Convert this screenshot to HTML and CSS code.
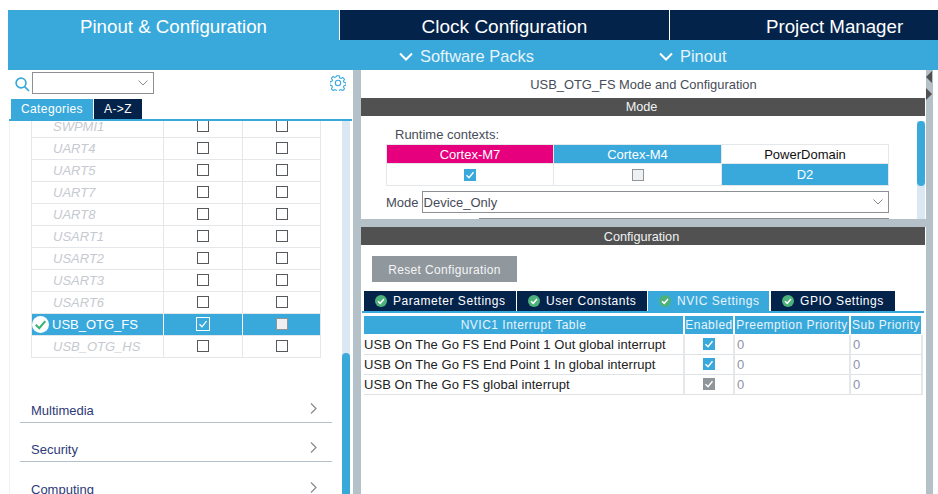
FILE: index.html
```html
<!DOCTYPE html>
<html lang="en">
<head>
<meta charset="utf-8">
<title>USB_OTG_FS Mode and Configuration</title>
<link rel="stylesheet" href="styles.css">
</head>
<body>
<div class="app">
  <header class="topbar">
    <nav class="maintabs">
      <div class="maintab pinout">Pinout &amp; Configuration</div>
      <div class="maintab clock">Clock Configuration</div>
      <div class="maintab project">Project Manager</div>
    </nav>
    <div class="subbar">
      <div class="subleft"></div>
      <div class="subitem packs"><svg class="subchev" viewBox="0 0 14 9"><path d="M1 1.5 7 7.5 13 1.5" /></svg>Software Packs</div>
      <div class="subitem pins"><svg class="subchev" viewBox="0 0 14 9"><path d="M1 1.5 7 7.5 13 1.5" /></svg>Pinout</div>
    </div>
  </header>
  <main class="content">
    <aside class="left">
      <div class="searchrow">
        <svg class="search" viewBox="0 0 15 15"><circle cx="6" cy="6" r="4.9"/><path d="M9.6 9.6 14 14"/></svg>
        <div class="combo"><svg class="combochev" viewBox="0 0 10 6"><path d="M.5.5 5 5 9.5.5"/></svg></div>
        <svg class="gear" viewBox="0 0 16 16"><path d="M6.7.8h2.6l.4 2 1.2.6 1.8-1 1.8 1.9-1 1.7.5 1.3 2 .5v2.5l-2 .5-.5 1.2 1 1.8-1.8 1.8-1.8-1-1.200.5-.5 2H6.700l-.5-2-1.200-.5-1.800 1-1.800-1.800 1-1.800-.5-1.200-2-.5V6.800l2-.5.5-1.300-1-1.700L3 1.400l1.800 1 1.300-.6z"/><circle cx="8" cy="8" r="2.700"/></svg>
      </div>
      <div class="lefttabs">
        <div class="lefttab active">Categories</div>
        <div class="lefttab">A-&gt;Z</div>
      </div>
      <div class="leftbody">
        <div class="leftlist">
          <div class="periph">
            <div class="prow"><span class="pname">SWPMI1</span><span class="pcell"><i class="box"></i></span><span class="pcell"><i class="box"></i></span></div>
            <div class="prow"><span class="pname">UART4</span><span class="pcell"><i class="box"></i></span><span class="pcell"><i class="box"></i></span></div>
            <div class="prow"><span class="pname">UART5</span><span class="pcell"><i class="box"></i></span><span class="pcell"><i class="box"></i></span></div>
            <div class="prow"><span class="pname">UART7</span><span class="pcell"><i class="box"></i></span><span class="pcell"><i class="box"></i></span></div>
            <div class="prow"><span class="pname">UART8</span><span class="pcell"><i class="box"></i></span><span class="pcell"><i class="box"></i></span></div>
            <div class="prow"><span class="pname">USART1</span><span class="pcell"><i class="box"></i></span><span class="pcell"><i class="box"></i></span></div>
            <div class="prow"><span class="pname">USART2</span><span class="pcell"><i class="box"></i></span><span class="pcell"><i class="box"></i></span></div>
            <div class="prow"><span class="pname">USART3</span><span class="pcell"><i class="box"></i></span><span class="pcell"><i class="box"></i></span></div>
            <div class="prow"><span class="pname">USART6</span><span class="pcell"><i class="box"></i></span><span class="pcell"><i class="box"></i></span></div>
            <div class="prow selected">
              <span class="pname"><svg class="okbig" viewBox="0 0 16 16"><circle cx="8" cy="8" r="8"/><path d="M3.500 8.200 6.800 11.500 12.500 4.800"/></svg>USB_OTG_FS</span>
              <span class="pcell"><i class="box on"><svg viewBox="0 0 12 12"><path d="M2.500 6.300 5 8.800 9.500 3.200"/></svg></i></span>
              <span class="pcell"><i class="box dis"></i></span>
            </div>
            <div class="prow"><span class="pname">USB_OTG_HS</span><span class="pcell"><i class="box"></i></span><span class="pcell"><i class="box"></i></span></div>
          </div>
          <div class="cat first"><span>Multimedia</span><svg class="catchev" viewBox="0 0 7 11"><path d="M1 .5 6 5.500 1 10.500"/></svg></div>
          <div class="cat"><span>Security</span><svg class="catchev" viewBox="0 0 7 11"><path d="M1 .5 6 5.500 1 10.500"/></svg></div>
          <div class="cat"><span>Computing</span><svg class="catchev" viewBox="0 0 7 11"><path d="M1 .5 6 5.500 1 10.500"/></svg></div>
        </div>
        <div class="lefttrack"><div class="leftthumb"></div></div>
      </div>
    </aside>
    <div class="splitter"></div>
    <section class="right">
      <h1 class="paneltitle">USB_OTG_FS Mode and Configuration</h1>
      <h2 class="bandhead">Mode</h2>
      <div class="modebody">
        <div class="modeinner">
          <div class="rtlabel">Runtime contexts:</div>
          <div class="rttable">
            <div class="rth m7">Cortex-M7</div>
            <div class="rth m4">Cortex-M4</div>
            <div class="rth pd">PowerDomain</div>
            <div class="rtd"><i class="mini on"><svg viewBox="0 0 12 12"><path d="M2.500 6.300 5 8.800 9.500 3.200"/></svg></i></div>
            <div class="rtd"><i class="mini off"></i></div>
            <div class="rtd d2">D2</div>
          </div>
          <div class="moderow">
            <span class="modelabel">Mode</span>
            <div class="modeselect">Device_Only<svg class="combochev" viewBox="0 0 10 6"><path d="M.5.5 5 5 9.500.5"/></svg></div>
          </div>
          <div class="clipselect"></div>
        </div>
        <div class="modetrack"><div class="modethumb"></div></div>
      </div>
      <div class="sep"></div>
      <h2 class="bandhead cfg">Configuration</h2>
      <div class="configbody">
        <button class="reset" type="button">Reset Configuration</button>
        <div class="cfgtabs">
          <div class="cfgtab t1"><svg class="ok" viewBox="0 0 12 12"><circle cx="6" cy="6" r="6"/><path d="M3 6.200 5.200 8.300 9 3.900"/></svg>Parameter Settings</div>
          <div class="cfgtab t2"><svg class="ok" viewBox="0 0 12 12"><circle cx="6" cy="6" r="6"/><path d="M3 6.200 5.200 8.300 9 3.900"/></svg>User Constants</div>
          <div class="cfgtab t3 active"><svg class="ok" viewBox="0 0 12 12"><circle cx="6" cy="6" r="6"/><path d="M3 6.200 5.200 8.300 9 3.900"/></svg>NVIC Settings</div>
          <div class="cfgtab t4"><svg class="ok" viewBox="0 0 12 12"><circle cx="6" cy="6" r="6"/><path d="M3 6.200 5.200 8.300 9 3.900"/></svg>GPIO Settings</div>
        </div>
        <div class="nvic">
          <div class="nh">NVIC1 Interrupt Table</div>
          <div class="nh">Enabled</div>
          <div class="nh">Preemption Priority</div>
          <div class="nh">Sub Priority</div>

          <div class="nd name">USB On The Go FS End Point 1 Out global interrupt</div>
          <div class="nd chk"><i class="mini on"><svg viewBox="0 0 12 12"><path d="M2.500 6.300 5 8.800 9.500 3.200"/></svg></i></div>
          <div class="nd val">0</div>
          <div class="nd val">0</div>

          <div class="nd name">USB On The Go FS End Point 1 In global interrupt</div>
          <div class="nd chk"><i class="mini on"><svg viewBox="0 0 12 12"><path d="M2.500 6.300 5 8.800 9.500 3.200"/></svg></i></div>
          <div class="nd val">0</div>
          <div class="nd val">0</div>

          <div class="nd name">USB On The Go FS global interrupt</div>
          <div class="nd chk"><i class="mini gray"><svg viewBox="0 0 12 12"><path d="M2.500 6.300 5 8.800 9.500 3.200"/></svg></i></div>
          <div class="nd val">0</div>
          <div class="nd val">0</div>
        </div>
      </div>
    </section>
    <div class="rightrail">
      <span class="arrow la"></span>
      <span class="arrow ra"></span>
    </div>
  </main>
</div>
</body>
</html>
```

FILE: styles.css
```css
* { box-sizing: border-box; }
html, body { margin: 0; height: 100%; background: #fff; overflow: hidden; }
body { font-family: "Liberation Sans", Arial, sans-serif; font-size: 13px; color: #3a3f4a; }
svg { display: block; }
i { display: block; font-style: normal; }

.app { width: 938px; height: 494px; padding: 10px 0 0 8px; display: flex; flex-direction: column; overflow: hidden; }

/* top bar */
.topbar { flex: none; height: 60px; background: #39a9dc; }
.maintabs { display: grid; grid-template-columns: 331px 329px 1fr; gap: 1px; height: 30px; background: #fff; }
.maintab { display: flex; align-items: center; justify-content: center; font-size: 18.7px; color: #fff; background: #03234b; height: 30px; padding-top: 3px; }
.pinout { background: #39a9dc; }
.clock { font-size: 19px; }
.project { justify-content: flex-start; padding-left: 96px; }
.subbar { display: grid; grid-template-columns: 391px 260px 1fr; height: 30px; }
.subitem { display: flex; align-items: center; gap: 7px; font-size: 16.4px; color: #e8f4fb; height: 30px; padding-top: 2px; }
.subchev { width: 14px; height: 9px; fill: none; stroke: #fff; stroke-width: 2; }

/* content */
.content { flex: 1; min-height: 0; display: flex; }
.left { width: 345px; flex: none; display: flex; flex-direction: column; min-height: 0; }
.splitter { width: 8px; flex: none; background: #b5c1c9; }
.right { width: 565px; flex: none; display: flex; flex-direction: column; min-height: 0; background: #fff; }
.rightrail { width: 7px; flex: none; background: #b5c1c9; display: flex; flex-direction: column; align-items: flex-start; gap: 5px; padding-top: 1px; }
.arrow { display: block; width: 0; height: 0; border-style: solid; }
.la { border-width: 6px 6px 6px 0; border-color: transparent #505150 transparent transparent; }
.ra { border-width: 6px 0 6px 6px; border-color: transparent transparent transparent #505150; }

/* left panel */
.searchrow { height: 29px; flex: none; display: flex; align-items: flex-start; padding: 2px 7px 0 7px; }
.search { width: 15px; height: 15px; margin-top: 5px; fill: none; stroke: #39a9dc; stroke-width: 1.700; }
.combo { width: 122px; height: 22px; margin-left: 2px; border: 1px solid #8c9095; display: flex; align-items: center; justify-content: flex-end; padding-right: 5px; }
.combochev { width: 10px; height: 6px; fill: none; stroke: #858a8f; stroke-width: 1; }
.gear { width: 16px; height: 16px; margin: 3px 0 0 auto; fill: none; stroke: #39a9dc; stroke-width: 1.100; }
.lefttabs { height: 22px; flex: none; display: flex; gap: 1px; margin: 0 1px; padding-left: 2px; border-bottom: 2px solid #39a9dc; }
.lefttab { width: 48px; height: 20px; background: #03234b; color: #fff; font-size: 12px; letter-spacing: .4px; display: flex; align-items: center; justify-content: center; }
.lefttab.active { width: 82px; background: #39a9dc; }
.leftbody { flex: 1; min-height: 0; display: flex; overflow: hidden; padding-left: 1px; }
.leftlist { width: 333px; flex: none; border-left: 1px solid #eef0f2; }
.periph { margin: -5px 0 0 21px; width: 290px; border-left: 1px solid #e5e8ea; border-right: 1px solid #e5e8ea; }
.prow { height: 22px; display: grid; grid-template-columns: 131px 79px 1fr; border-bottom: 1px solid #e5e8ea; }
.pname { display: flex; align-items: center; padding-left: 21px; font-style: italic; font-size: 13px; color: #c6cad0; }
.pcell { display: flex; align-items: center; justify-content: center; border-left: 1px solid #e5e8ea; }
.box { width: 12px; height: 12px; margin-bottom: 1px; border: 1px solid #55595e; background: #fff; }
.prow.selected { background: #39a9dc; }
.prow.selected .pname { color: #fff; font-style: normal; padding-left: 0; gap: 3px; }
.prow.selected .pcell { border-left-color: #fff; }
.okbig { width: 17px; height: 17px; flex: none; }
.okbig circle { fill: #fff; }
.okbig path { fill: none; stroke: #3cb371; stroke-width: 2; }
.box.on { width: 14px; height: 14px; border: 1px solid #fff; background: #39a9dc; }
.box.on svg { width: 12px; height: 12px; fill: none; stroke: #fff; stroke-width: 1.300; }
.box.dis { background: #eef0f2; border-color: #90959a; }
.cat { height: 39px; margin-left: 10px; width: 312px; padding: 0 15px 4px 11px; font-size: 13px; color: #2e3a78; border-bottom: 1px solid #b5c1c9; display: flex; align-items: flex-end; justify-content: space-between; }
.cat.first { margin-top: 26px; }
.cat:last-child { border-bottom: 0; }
.catchev { width: 7px; height: 11px; margin-bottom: 4px; fill: none; stroke: #858a8f; stroke-width: 1.200; }
.lefttrack { width: 8px; flex: none; background: #dbe8f4; display: flex; flex-direction: column; justify-content: flex-end; }
.leftthumb { height: 141px; background: #39a9dc; border-radius: 4px 4px 0 0; }

/* right panel */
.paneltitle { margin: 0; height: 28px; flex: none; display: flex; align-items: center; justify-content: center; padding-top: 1px; font-size: 12.900px; font-weight: 400; color: #474c58; }
.bandhead { margin: 0 1px 0 0; height: 18px; flex: none; display: flex; align-items: center; justify-content: center; padding-right: 3px; background: #505150; color: #f0f2f4; font-size: 12.700px; font-weight: 400; }
.bandhead.cfg { padding-top: 1px; }
.modebody { height: 103px; flex: none; display: flex; overflow: hidden; }
.modeinner { width: 556px; flex: none; padding: 12px 0 0 25px; }
.rtlabel { height: 16px; padding-left: 9px; font-size: 13px; color: #474c58; line-height: 14px; }
.rttable { width: 503px; display: grid; grid-template-columns: 166px 167px 1fr; grid-template-rows: 18px 21px; gap: 1px; background: #e5e8ea; border: 1px solid #e5e8ea; }
.rth, .rtd { display: flex; align-items: center; justify-content: center; background: #fff; font-size: 13px; }
.rth { color: #fff; }
.m7 { background: #e6007e; }
.m4 { background: #39a9dc; }
.rth.pd { color: #111; }
.rtd.d2 { background: #39a9dc; color: #fff; }
.mini { width: 12px; height: 12px; }
.mini svg { width: 12px; height: 12px; fill: none; stroke: #fff; stroke-width: 1.400; }
.mini.on { background: #39a9dc; }
.mini.gray { background: #90959a; }
.mini.off { background: #eef0f2; border: 1px solid #90959a; }
.moderow { display: flex; align-items: center; gap: 3px; height: 22px; margin-top: 5px; }
.modelabel { font-size: 13px; color: #474c58; }
.modeselect { width: 467px; height: 22px; border: 1px solid #8c9095; display: flex; align-items: center; justify-content: space-between; padding: 0 5px 0 1px; font-size: 13px; color: #474c58; }
.clipselect { margin: 5px 0 0 93px; width: 410px; height: 1px; background: #8c9095; }
.modetrack { width: 8px; flex: none; margin-top: 5px; background: #dbe8f4; }
.modethumb { height: 65px; background: #39a9dc; border-radius: 4px; }
.sep { height: 8px; flex: none; background: #b5c1c9; }
.configbody { flex: 1; min-height: 0; padding: 11px 0 0 1px; }
.reset { display: block; width: 145px; height: 26px; margin-left: 10px; padding: 1px 0 0; border: 0; background: #90979d; color: #f4f5f6; font: 12px "Liberation Sans", Arial, sans-serif; letter-spacing: .35px; }
.cfgtabs { display: flex; gap: 1px; height: 22px; margin-top: 9px; width: 562px; padding-left: 2px; border-bottom: 2px solid #39a9dc; }
.cfgtab { height: 20px; display: flex; align-items: center; gap: 6px; background: #03234b; color: #fff; font-size: 12px; letter-spacing: .55px; padding-left: 11px; }
.cfgtab.active { background: #39a9dc; color: #e8f4fb; }
.t1 { width: 152px; }
.t2 { width: 130px; }
.t3 { width: 121px; }
.t4 { width: 124px; margin-left: 1px; }
.ok { width: 12px; height: 12px; flex: none; }
.ok circle { fill: #4cb27a; }
.ok path { fill: none; stroke: #fff; stroke-width: 1.500; }
.nvic { display: grid; grid-template-columns: 319px 48px 114px 70px; grid-template-rows: 19px repeat(3, 20px); column-gap: 2px; margin: 3px 0 0 2px; }
.nh { height: 18px; background: #39a9dc; color: #e8f4fb; font-size: 12px; letter-spacing: .5px; display: flex; align-items: center; justify-content: center; white-space: nowrap; }
.nd { margin-right: -2px; padding-bottom: 1px; border-bottom: 1px solid #dfe3e6; border-right: 2px solid #e5e8ea; display: flex; align-items: center; font-size: 13px; }
.nd.name { color: #222; letter-spacing: .04px; white-space: nowrap; }
.nd.chk { justify-content: center; }
.nd.val { padding-left: 2px; color: #8d93a8; }
```
